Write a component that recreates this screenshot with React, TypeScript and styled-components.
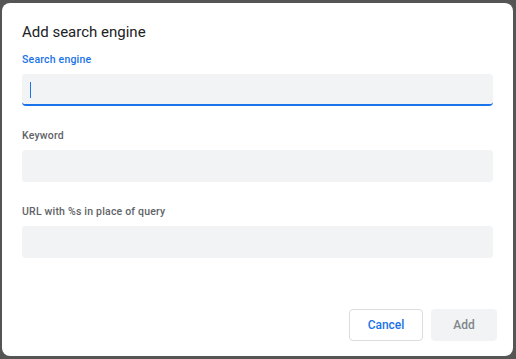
import styled, { createGlobalStyle } from "styled-components";

const GlobalStyle = createGlobalStyle`
  html, body {
    margin: 0;
    padding: 0;
    background: #555555;
    font-family: Roboto, "Liberation Sans", sans-serif;
  }
`;

const fields = [
  { label: "Search engine", focused: true },
  { label: "Keyword", focused: false },
  { label: "URL with %s in place of query", focused: false },
];

function App() {
  return (
    <>
      <GlobalStyle />
      <Backdrop>
        <Dialog>
          <Title>Add search engine</Title>
          <Body>
            {fields.map((field) => (
              <Field key={field.label}>
                <Label $focused={field.focused}>{field.label}</Label>
                <InputBox $focused={field.focused}>
                  {field.focused && <Caret />}
                </InputBox>
              </Field>
            ))}
          </Body>
          <Actions>
            <CancelButton>Cancel</CancelButton>
            <AddButton disabled>Add</AddButton>
          </Actions>
        </Dialog>
      </Backdrop>
    </>
  );
}

export default App;

const Backdrop = styled.div`
  width: 516px;
  height: 359px;
  padding: 3px 3px 3px 2px;
  box-sizing: border-box;
  display: flex;
`;

const Dialog = styled.div`
  flex: 1;
  background: #ffffff;
  border-radius: 8px;
  display: flex;
  flex-direction: column;
  padding: 19px 16px 15px 20px;
  box-sizing: border-box;
`;

const Title = styled.div`
  font-size: 15px;
  color: #202124;
  line-height: 20px;
  margin-bottom: 11px;
`;

const Body = styled.div`
  display: flex;
  flex-direction: column;
  gap: 23px;
  padding-right: 4px;
`;

const Field = styled.div`
  display: flex;
  flex-direction: column;
`;

const Label = styled.div<{ $focused: boolean }>`
  font-size: 10.5px;
  font-weight: 500;
  letter-spacing: 0.2px;
  line-height: 14px;
  color: ${(p) => (p.$focused ? "#1a73e8" : "#5f6368")};
  margin-bottom: 7px;
`;

const InputBox = styled.div<{ $focused: boolean }>`
  height: 32px;
  box-sizing: border-box;
  background: #f1f3f4;
  border-radius: 4px;
  border-bottom: 2px solid ${(p) => (p.$focused ? "#1a73e8" : "transparent")};
  display: flex;
  align-items: center;
  padding-left: 8px;
`;

const Caret = styled.div`
  width: 1px;
  height: 16px;
  background: #1a73e8;
  margin-top: 2px;
`;

const Actions = styled.div`
  margin-top: auto;
  display: flex;
  justify-content: flex-end;
  gap: 8px;
`;

const BaseButton = styled.button`
  height: 32px;
  border-radius: 4px;
  font-family: Roboto, "Liberation Sans", sans-serif;
  font-size: 12px;
  font-weight: 500;
  padding: 0 16px;
  box-sizing: border-box;
`;

const CancelButton = styled(BaseButton)`
  width: 74px;
  background: #ffffff;
  color: #1a73e8;
  border: 1px solid #dadce0;
`;

const AddButton = styled(BaseButton)`
  width: 66px;
  background: #f1f3f4;
  color: #80868b;
  border: none;
`;
